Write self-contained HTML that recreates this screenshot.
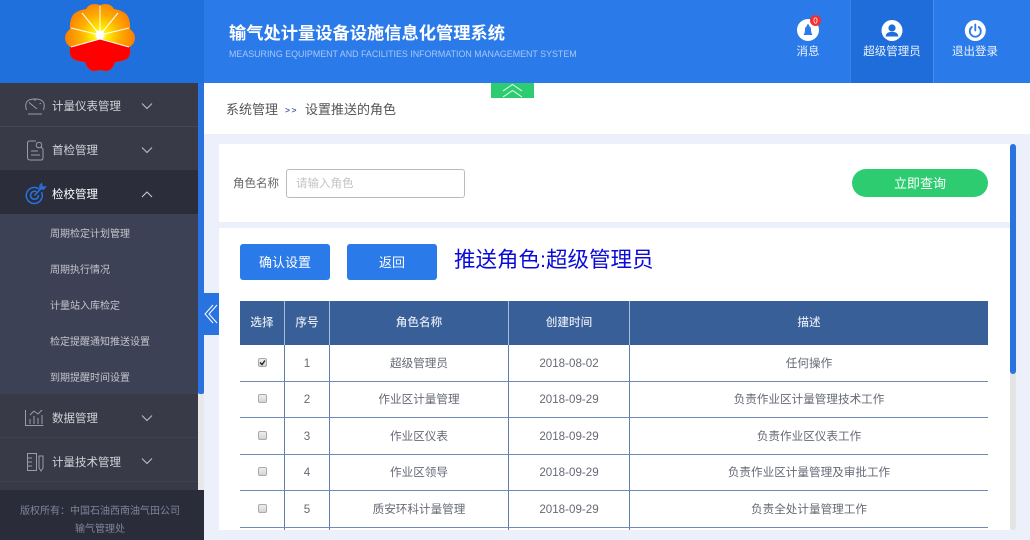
<!DOCTYPE html>
<html lang="zh"><head><meta charset="utf-8"><title>输气处计量设备设施信息化管理系统</title>
<style>
*{box-sizing:border-box;margin:0;padding:0}
html,body{width:1030px;height:540px;overflow:hidden;background:#ecf0fb;font-family:"Liberation Sans","Noto Sans CJK SC",sans-serif}
.a{position:absolute}
.t{position:absolute;white-space:nowrap;line-height:1}
.c{position:absolute;text-align:center;white-space:nowrap;line-height:1}
.m{color:#d3d3d8;font-size:11.5px;left:52px}
.s{color:#c4c5cc;font-size:10px;left:50px}
.th{color:#dfe6f2;font-size:11.6px;top:317px;font-weight:500}
.td{color:#666a75;font-size:11.6px}
.v{position:absolute;width:1px;top:345px;height:185px;background:#5f7fb3}
.vh{position:absolute;width:1px;top:301px;height:44px;background:#a9bcd8}
.h{position:absolute;left:240px;width:748px;height:1px;background:#6f8cb9}
.cb{position:absolute;left:258px;width:9px;height:9px;border:1px solid #aaa;border-radius:2px;background:linear-gradient(#eee,#d4d4d4)}
.nav{color:#eaf2ff;font-size:11.5px;top:47px}
</style></head><body>
<!-- header -->
<div class="a" style="left:0;top:0;width:204px;height:83px;background:#1f6fdd"></div>
<div class="a" style="left:204px;top:0;width:826px;height:83px;background:#2b7aea"></div>
<div class="a" style="left:850px;top:0;width:84px;height:83px;background:#1e6ddb;border-left:1px solid #3a82e6;border-right:1px solid #4a8cec"></div>
<svg class="a" style="left:0;top:0" width="204" height="83">
<defs><radialGradient id="g" gradientUnits="userSpaceOnUse" cx="100" cy="35" r="36"><stop offset="0" stop-color="#fff"/><stop offset=".2" stop-color="#ffec00"/><stop offset=".55" stop-color="#ffae00"/><stop offset="1" stop-color="#fb7a00"/></radialGradient>
<clipPath id="r"><path d="M60 47L71 47L100 39L129 47L140 47V80H60Z"/></clipPath></defs>
<path fill="url(#g)" d="M86 9Q89 4 94 4Q97 4 100 5Q103 4 106 4Q111 4 114 9Q127 11 129 19Q130.500 24 130 29Q135 33 135 38Q135 43 130 47Q131 54 128 58Q125 61 115 62Q112 71 106 71Q103 71 100 70Q97 71 94 71Q88 71 85 62Q75 61 72 58Q69 54 70 47Q65 43 65 38Q65 33 70 29Q69.500 24 71 19Q73 11 86 9Z"/>
<path clip-path="url(#r)" fill="#f00" d="M86 9Q89 4 94 4Q97 4 100 5Q103 4 106 4Q111 4 114 9Q127 11 129 19Q130.500 24 130 29Q135 33 135 38Q135 43 130 47Q131 54 128 58Q125 61 115 62Q112 71 106 71Q103 71 100 70Q97 71 94 71Q88 71 85 62Q75 61 72 58Q69 54 70 47Q65 43 65 38Q65 33 70 29Q69.500 24 71 19Q73 11 86 9Z"/>
<g stroke="#fff" stroke-width="1" fill="none"><path d="M100 35V6M100 35L82 13M100 35L118 13M100 35L71 28M100 35L129 28M71 47L100 39L129 47"/></g>
<circle cx="100" cy="35" r="4.5" fill="#fff"/>
</svg>
<div class="t" style="left:229px;top:25px;font-size:17.25px;font-weight:700;color:#fff">输气处计量设备设施信息化管理系统</div>
<div class="t" style="left:229px;top:50px;font-size:8.9px;color:#a6c8f6">MEASURING EQUIPMENT AND FACILITIES INFORMATION MANAGEMENT SYSTEM</div>
<svg class="a" style="left:780px;top:0" width="250" height="50">
<circle cx="28" cy="30" r="11" fill="#fff"/>
<path fill="#2b7aea" d="M23.500 35Q25 33 25 29.500Q25 26 28 26Q31 26 31 29.500Q31 33 32.500 35Z"/>
<circle cx="28" cy="25.500" r="1.200" fill="#2b7aea"/>
<circle cx="35.500" cy="20.500" r="5.500" fill="#f33030"/>
<text x="35.500" y="23.500" font-size="8" fill="#fff" text-anchor="middle" font-family="Liberation Sans">0</text>
<circle cx="112" cy="30.500" r="10.500" fill="#fff"/>
<circle cx="112" cy="28" r="3.600" fill="#1e6ddb"/>
<path fill="#1e6ddb" d="M105.500 36.500Q106 32.500 110 32H114Q118 32.500 118.500 36.500Z"/>
<circle cx="195.300" cy="30.500" r="10.500" fill="#fff"/>
<path fill="none" stroke="#2b7aea" stroke-width="1.800" stroke-linecap="round" d="M191.800 27A5.500 5.500 0 1 0 198.800 27M195.300 24.500V30.500"/>
</svg>
<div class="c nav" style="left:780px;width:56px">消息</div>
<div class="c nav" style="left:850px;width:84px">超级管理员</div>
<div class="c nav" style="left:934px;width:82px">退出登录</div>

<!-- sidebar -->
<div class="a" style="left:0;top:83px;width:198px;height:407px;background:#383a48"></div>
<div class="a" style="left:0;top:126px;width:198px;height:1px;background:#444654"></div>
<div class="a" style="left:0;top:170px;width:198px;height:44px;background:#2b2d3b"></div>
<div class="a" style="left:0;top:214px;width:198px;height:180px;background:#3d4155"></div>
<div class="a" style="left:0;top:437px;width:198px;height:1px;background:#404250"></div>
<div class="a" style="left:0;top:481px;width:198px;height:1px;background:#404250"></div>
<div class="a" style="left:198px;top:83px;width:6px;height:407px;background:#e8e8e8"></div>
<div class="a" style="left:198px;top:83px;width:6px;height:311px;background:#2873e0;border-radius:0 0 2px 2px"></div>
<div class="a" style="left:0;top:490px;width:204px;height:50px;background:#2a2c3a"></div>

<div class="t m" style="top:102px">计量仪表管理</div>
<div class="t m" style="top:146px">首检管理</div>
<div class="t m" style="top:190px;color:#fff">检校管理</div>
<div class="t s" style="top:230px">周期检定计划管理</div>
<div class="t s" style="top:266px">周期执行情况</div>
<div class="t s" style="top:302px">计量站入库检定</div>
<div class="t s" style="top:338px">检定提醒通知推送设置</div>
<div class="t s" style="top:374px">到期提醒时间设置</div>
<div class="t m" style="top:414px">数据管理</div>
<div class="t m" style="top:458px">计量技术管理</div>
<div class="c" style="left:0;top:507px;width:200px;font-size:10px;color:#7f8499">版权所有：中国石油西南油气田公司</div>
<div class="c" style="left:0;top:525px;width:200px;font-size:10px;color:#7f8499">输气管理处</div>

<svg class="a" style="left:0;top:83px" width="198" height="407" fill="none" stroke="#9a9ca6" stroke-width="1">
<path d="M142 20.500l5 5 5-5M142 64.500l5 5 5-5M142 332.500l5 5 5-5M142 375.500l5 5 5-5" stroke="#c0c1c8"/>
<path d="M142 114l5-5 5 5" stroke="#d0d1d6"/>
<path d="M26.500 27Q23 16 35 16Q47 16 43.500 27M28 31H42M29 19.500L37 26M35 16V18M41 20L39.500 21"/>
<path d="M36 58H30Q27.500 58 27.500 60V74Q27.500 77 30 77H41Q43 77 43 75V66M31 68H38M31 72H40"/><circle cx="39" cy="62" r="2.800"/><path d="M41 64L43 66"/>
<g stroke="#2873e0" stroke-width="1.500"><path d="M39 106A8 8 0 1 0 41.500 109"/><path d="M36.500 108.800A4 4 0 1 0 38.500 112M34.500 112.500L42 104.500M40 105V102.500L41.500 101L42 104.500L45 104L43.500 106Z"/></g>
<path d="M25.500 327V342.500H43.500M30 341V336M34 341V333M38 341V335M42 341V332M30 332L34 328L38 331L42 327"/>
<path d="M27.500 370.500H36.500V387.500H27.500ZM27.500 375H32M27.500 379H32M27.500 383H32M39 373H43V385L41 388L39 385Z"/>
</svg>

<!-- breadcrumb -->
<div class="a" style="left:204px;top:83px;width:826px;height:51px;background:#fff"></div>
<div class="a" style="left:491px;top:83px;width:43px;height:15px;background:#2ecc71"></div>
<svg class="a" style="left:491px;top:83px" width="43" height="15" fill="none" stroke="#e8f9ef" stroke-width="1"><path d="M12 8L21.500 1.500L31 8M12 14L21.500 7.500L31 14"/></svg>
<div class="t" style="left:226px;top:103px;font-size:13px;color:#555">系统管理</div>
<div class="t" style="left:285px;top:106px;font-size:8.5px;color:#4a5fa0;letter-spacing:1.500px;font-weight:700">&gt;&gt;</div>
<div class="t" style="left:305px;top:103px;font-size:13px;color:#555">设置推送的角色</div>

<!-- collapse -->
<div class="a" style="left:204px;top:293px;width:15px;height:42px;background:#2873e0"></div>
<svg class="a" style="left:204px;top:293px" width="15" height="42" fill="none" stroke="#fff" stroke-width="1"><path d="M9 12L1 21L9 30M13 12L5 21L13 30"/></svg>

<!-- query card -->
<div class="a" style="left:219px;top:144px;width:791px;height:78px;background:#fff"></div>
<div class="t" style="left:233px;top:179px;font-size:11.5px;color:#666">角色名称</div>
<div class="a" style="left:286px;top:169px;width:179px;height:29px;border:1px solid #bbb;border-radius:3px;background:#fff"></div>
<div class="t" style="left:296px;top:179px;font-size:11.5px;color:#c4c4c4">请输入角色</div>
<div class="a" style="left:852px;top:169px;width:136px;height:28px;border-radius:14px;background:#2ecc71"></div>
<div class="c" style="left:852px;top:177px;width:136px;font-size:13px;color:#fff">立即查询</div>

<!-- scrollbar -->
<div class="a" style="left:1010px;top:144px;width:6px;height:386px;background:#e4e4e4;border-radius:3px"></div>
<div class="a" style="left:1010px;top:144px;width:6px;height:230px;background:#2873e0;border-radius:3px"></div>

<!-- table card -->
<div class="a" style="left:219px;top:228px;width:791px;height:302px;background:#fff"></div>
<div class="a" style="left:240px;top:244px;width:90px;height:36px;background:#2b7aea;border-radius:3px"></div>
<div class="a" style="left:347px;top:244px;width:90px;height:36px;background:#2b7aea;border-radius:3px"></div>
<div class="c" style="left:240px;top:256px;width:90px;font-size:13px;color:#fff">确认设置</div>
<div class="c" style="left:347px;top:256px;width:90px;font-size:13px;color:#fff">返回</div>
<div class="t" style="left:454px;top:250px;font-size:21.500px;color:#0b0bd8">推送角色:超级管理员</div>

<div class="a" style="left:240px;top:301px;width:748px;height:44px;background:#385f98"></div>
<div class="v" style="left:284px"></div><div class="v" style="left:329px"></div><div class="v" style="left:508px"></div><div class="v" style="left:629px"></div>
<div class="vh" style="left:284px"></div><div class="vh" style="left:329px"></div><div class="vh" style="left:508px"></div><div class="vh" style="left:629px"></div>
<div class="h" style="top:381px"></div><div class="h" style="top:417px"></div><div class="h" style="top:454px"></div><div class="h" style="top:490px"></div><div class="h" style="top:527px"></div>

<div class="c th" style="left:240px;width:44px">选择</div>
<div class="c th" style="left:285px;width:44px">序号</div>
<div class="c th" style="left:330px;width:178px">角色名称</div>
<div class="c th" style="left:509px;width:120px">创建时间</div>
<div class="c th" style="left:630px;width:358px">描述</div>

<div class="cb" style="top:358px"></div>
<svg class="a" style="left:258px;top:358px" width="9" height="9" fill="none" stroke="#222" stroke-width="1.400"><path d="M2 4.500L4 6.500L7 2.500"/></svg>
<div class="c td" style="left:285px;top:358px;width:44px">1</div>
<div class="c td" style="left:330px;top:358px;width:178px">超级管理员</div>
<div class="c td" style="left:509px;top:358px;width:120px">2018-08-02</div>
<div class="c td" style="left:630px;top:358px;width:358px">任何操作</div>

<div class="cb" style="top:394px"></div>
<div class="c td" style="left:285px;top:394px;width:44px">2</div>
<div class="c td" style="left:330px;top:394px;width:178px">作业区计量管理</div>
<div class="c td" style="left:509px;top:394px;width:120px">2018-09-29</div>
<div class="c td" style="left:630px;top:394px;width:358px">负责作业区计量管理技术工作</div>

<div class="cb" style="top:431px"></div>
<div class="c td" style="left:285px;top:431px;width:44px">3</div>
<div class="c td" style="left:330px;top:431px;width:178px">作业区仪表</div>
<div class="c td" style="left:509px;top:431px;width:120px">2018-09-29</div>
<div class="c td" style="left:630px;top:431px;width:358px">负责作业区仪表工作</div>

<div class="cb" style="top:467px"></div>
<div class="c td" style="left:285px;top:467px;width:44px">4</div>
<div class="c td" style="left:330px;top:467px;width:178px">作业区领导</div>
<div class="c td" style="left:509px;top:467px;width:120px">2018-09-29</div>
<div class="c td" style="left:630px;top:467px;width:358px">负责作业区计量管理及审批工作</div>

<div class="cb" style="top:504px"></div>
<div class="c td" style="left:285px;top:504px;width:44px">5</div>
<div class="c td" style="left:330px;top:504px;width:178px">质安环科计量管理</div>
<div class="c td" style="left:509px;top:504px;width:120px">2018-09-29</div>
<div class="c td" style="left:630px;top:504px;width:358px">负责全处计量管理工作</div>
</body></html>
